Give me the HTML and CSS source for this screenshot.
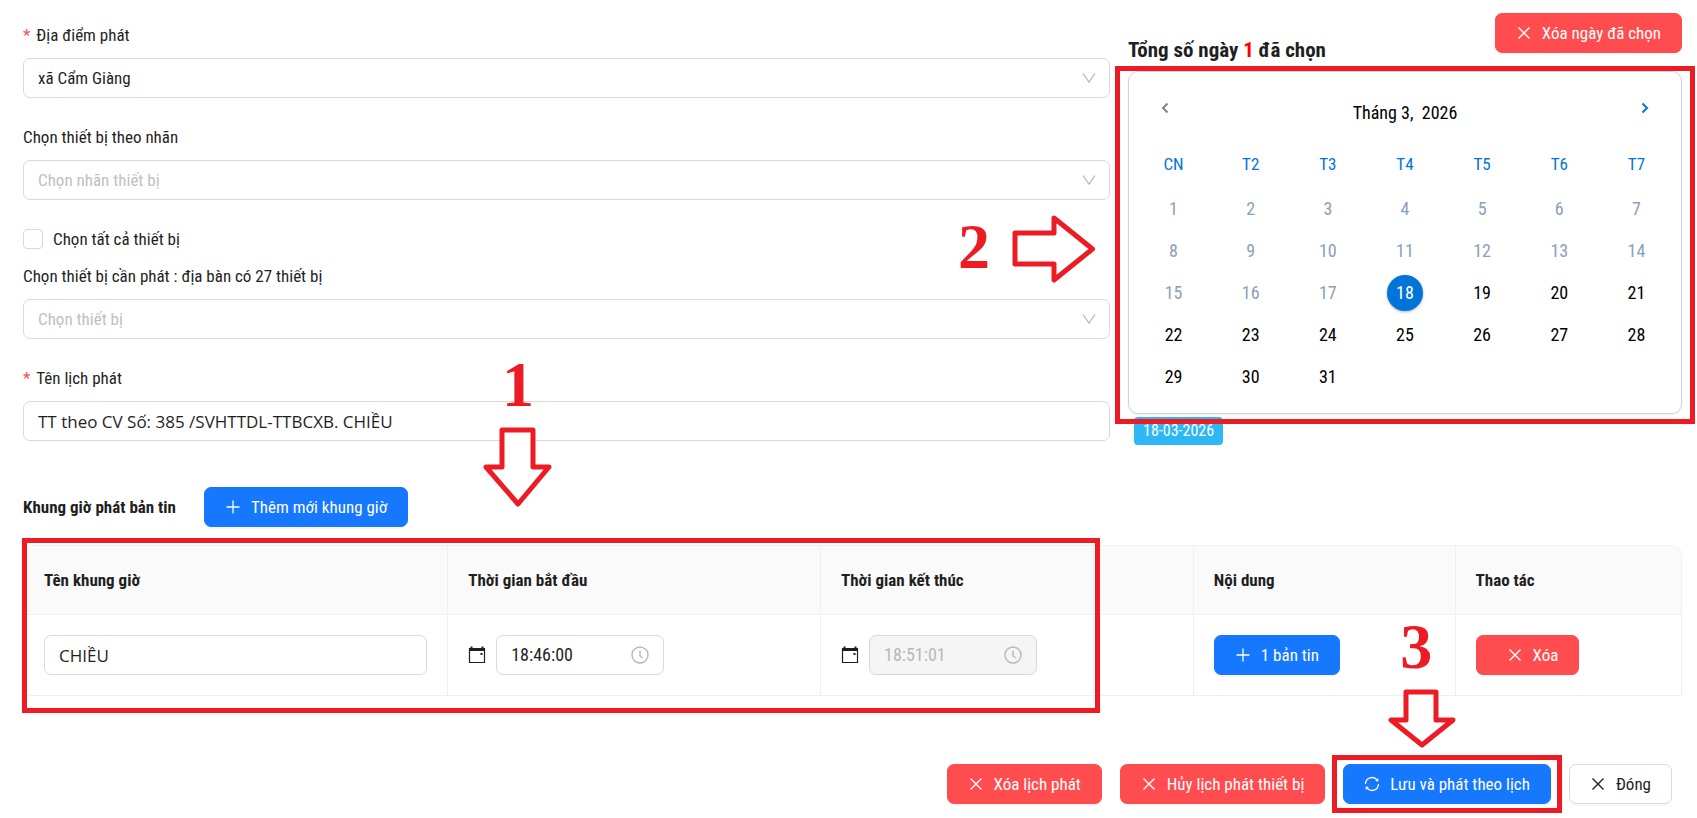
FILE: index.html
```html
<!DOCTYPE html>
<html lang="vi">
<head>
<meta charset="utf-8">
<title>Lịch phát</title>
<link rel="stylesheet" href="styles.css">
</head>
<body>
<svg class="sprite" aria-hidden="true">
  <symbol id="close" viewBox="0 0 16 16"><path d="M2.500 2.500l11 11M13.500 2.500l-11 11" fill="none" stroke="currentColor" stroke-width="1.400"/></symbol>
  <symbol id="plus" viewBox="0 0 16 16"><path d="M8 1.500v13M1.500 8h13" fill="none" stroke="currentColor" stroke-width="1.300"/></symbol>
  <symbol id="down" viewBox="0 0 16 16"><path d="M2 3.500l6 8.500 6-8.500" fill="none" stroke="currentColor" stroke-width="1.300"/></symbol>
  <symbol id="clock" viewBox="0 0 18 18"><circle cx="9" cy="9" r="8" fill="none" stroke="currentColor" stroke-width="1.400"/><path d="M9 4.500V10l3 2" fill="none" stroke="currentColor" stroke-width="1.400"/></symbol>
  <symbol id="date" viewBox="0 0 18 18"><path d="M1.500 2.500h15v14h-15z" fill="none" stroke="currentColor" stroke-width="1.200"/><path d="M1 2h16v3H1zM2.500.5h2V2h-2zM13.500.5h2V2h-2zM12.500 7h2v2h-2z" fill="currentColor"/></symbol>
  <symbol id="sync" viewBox="0 0 16 16"><path d="M1.500 8A6.500 6.500 0 0 1 13.200 4.200M14.500 8A6.500 6.500 0 0 1 2.800 11.800" fill="none" stroke="currentColor" stroke-width="1.300"/><path d="M14.300 2.200v3.300l-3.200-.4zM1.700 13.800v-3.300l3.200.4z" fill="currentColor"/></symbol>
</svg>
<main class="page">
  <div class="top">
    <form class="form">
      <div class="field">
        <label class="label required" for="place">Địa điểm phát</label>
        <div class="select">
          <select id="place"><option>xã Cẩm Giàng</option></select>
          <svg class="icon"><use href="#down"/></svg>
        </div>
      </div>
      <div class="field">
        <label class="label" for="tag">Chọn thiết bị theo nhãn</label>
        <div class="select">
          <select id="tag" class="empty"><option>Chọn nhãn thiết bị</option></select>
          <svg class="icon"><use href="#down"/></svg>
        </div>
      </div>
      <div class="field">
        <label class="check"><input type="checkbox">Chọn tất cả thiết bị</label>
        <label class="label" for="device">Chọn thiết bị cần phát : địa bàn có 27 thiết bị</label>
        <div class="select">
          <select id="device" class="empty"><option>Chọn thiết bị</option></select>
          <svg class="icon"><use href="#down"/></svg>
        </div>
      </div>
      <div class="field">
        <label class="label required" for="name">Tên lịch phát</label>
        <input class="input" id="name" type="text" value="TT theo CV Số: 385 /SVHTTDL-TTBCXB. CHIỀU">
      </div>
    </form>
    <section class="dates">
      <div class="dates-head">
        <h2>Tổng số ngày <span class="count">1</span> đã chọn</h2>
        <button class="btn danger"><svg class="icon"><use href="#close"/></svg>Xóa ngày đã chọn</button>
      </div>
      <div class="calendar">
        <div class="month">
          <button class="nav prev" aria-label="Tháng trước"><svg viewBox="0 0 8 12"><path d="M6.500 1.500L2 6l4.500 4.500" fill="none" stroke="currentColor" stroke-width="2"/></svg></button>
          <span class="month-name">Tháng 3, &nbsp;2026</span>
          <button class="nav next" aria-label="Tháng sau"><svg viewBox="0 0 8 12"><path d="M1.500 1.500L6 6l-4.500 4.500" fill="none" stroke="currentColor" stroke-width="2"/></svg></button>
        </div>
        <div class="week names"><span>CN</span><span>T2</span><span>T3</span><span>T4</span><span>T5</span><span>T6</span><span>T7</span></div>
        <div class="week">
          <button disabled>1</button><button disabled>2</button><button disabled>3</button><button disabled>4</button><button disabled>5</button><button disabled>6</button><button disabled>7</button>
          <button disabled>8</button><button disabled>9</button><button disabled>10</button><button disabled>11</button><button disabled>12</button><button disabled>13</button><button disabled>14</button>
          <button disabled>15</button><button disabled>16</button><button disabled>17</button><button class="picked">18</button><button>19</button><button>20</button><button>21</button>
          <button>22</button><button>23</button><button>24</button><button>25</button><button>26</button><button>27</button><button>28</button>
          <button>29</button><button>30</button><button>31</button>
        </div>
        <div class="frame frame-dates"></div>
        <div class="mark mark-2"><span>2</span><svg width="84" height="68" viewBox="0 0 84 68"><path d="M3 18h39V3l38.500 31L42 65V49H3z"/></svg></div>
      </div>
      <span class="chip">18-03-2026</span>
    </section>
  </div>

  <section class="slots">
    <div class="slots-head">
      <h3>Khung giờ phát bản tin</h3>
      <button class="btn primary"><svg class="icon"><use href="#plus"/></svg>Thêm mới khung giờ</button>
    </div>
    <table class="table">
      <colgroup><col class="c-name"><col class="c-time"><col class="c-time"><col class="c-content"><col class="c-action"></colgroup>
      <thead><tr><th>Tên khung giờ</th><th>Thời gian bắt đầu</th><th>Thời gian kết thúc</th><th>Nội dung</th><th>Thao tác</th></tr></thead>
      <tbody><tr>
        <td><input class="input" type="text" aria-label="Tên khung giờ" value="CHIỀU"></td>
        <td><div class="time"><svg class="date"><use href="#date"/></svg><div class="time-box"><input type="text" aria-label="Thời gian bắt đầu" value="18:46:00"><svg class="clock"><use href="#clock"/></svg></div></div></td>
        <td><div class="time"><svg class="date"><use href="#date"/></svg><div class="time-box off"><input type="text" aria-label="Thời gian kết thúc" value="18:51:01" disabled><svg class="clock"><use href="#clock"/></svg></div></div></td>
        <td><button class="btn primary"><svg class="icon"><use href="#plus"/></svg>1 bản tin</button></td>
        <td><button class="btn danger wide"><svg class="icon"><use href="#close"/></svg>Xóa</button></td>
      </tr></tbody>
    </table>
    <div class="frame frame-slots"></div>
    <div class="mark mark-1"><span>1</span><svg width="70" height="80" viewBox="0 0 70 80"><path d="M19 3h31v37h16L35 77 3 40h16z"/></svg></div>
  </section>

  <footer class="actions">
    <button class="btn danger"><svg class="icon"><use href="#close"/></svg>Xóa lịch phát</button>
    <button class="btn danger"><svg class="icon"><use href="#close"/></svg>Hủy lịch phát thiết bị</button>
    <div class="save">
      <button class="btn primary"><svg class="icon"><use href="#sync"/></svg>Lưu và phát theo lịch</button>
      <div class="frame frame-save"></div>
      <div class="mark mark-3"><span>3</span><svg width="68" height="60" viewBox="0 0 68 60"><path d="M18 3h30v28h17L34 56 3 31h15z"/></svg></div>
    </div>
    <button class="btn"><svg class="icon"><use href="#close"/></svg>Đóng</button>
  </footer>
</main>
</body>
</html>
```
FILE: styles.css
```css
* { box-sizing: border-box; }
body {
  margin: 0;
  background: #fff;
  color: #1f1f1f;
  font: 17px/24px "Liberation Sans Narrow", "Roboto Condensed", "Arial Narrow", "Liberation Sans", sans-serif;
}
button, input, select { font: inherit; color: inherit; margin: 0; }
button { cursor: pointer; }
h2, h3 { margin: 0; }
.sprite { display: none; }
.page { padding: 13px 15px 13px 23px; }

.top { display: grid; grid-template-columns: minmax(0, 1087fr) minmax(0, 554fr); gap: 18px; }
.form { display: flex; flex-direction: column; gap: 27px; padding-top: 10px; }
.field { display: flex; flex-direction: column; }
.label { margin-bottom: 11px; }
.required::before { content: "*"; color: #ff4d4f; margin-right: 6px; }
.select { position: relative; }
.select select, .input {
  display: block;
  width: 100%;
  height: 40px;
  padding: 0 14px;
  border: 1px solid #d9d9d9;
  border-radius: 7px;
  background: #fff;
  appearance: none;
}
.select .icon { position: absolute; right: 13px; top: 12px; width: 16px; height: 16px; color: #b8b8b8; }
select.empty { color: #bfbfbf; }
.input { font: 17px/24px "Open Sans", "Noto Sans", sans-serif; }
.check { display: flex; align-items: center; gap: 10px; margin-bottom: 13px; }
.check input {
  appearance: none;
  width: 20px;
  height: 20px;
  border: 1px solid #d9d9d9;
  border-radius: 4px;
}

.btn {
  display: inline-flex;
  align-items: center;
  justify-content: center;
  gap: 10px;
  height: 40px;
  padding: 0 20px;
  border: 1px solid #d9d9d9;
  border-radius: 7px;
  background: #fff;
  box-shadow: 0 2px 1px rgba(0, 0, 0, 0.03);
  white-space: nowrap;
}
.btn .icon { width: 16px; height: 16px; }
.primary { background: #1677ff; border-color: #1677ff; color: #fff; }
.danger { background: #ff4d4f; border-color: #ff4d4f; color: #fff; }
.wide { padding-left: 30px; }

.dates-head { display: flex; justify-content: space-between; height: 58px; }
.dates-head h2 { align-self: flex-end; font-size: 21px; line-height: 42px; }
.count { color: #f00; }
.calendar {
  position: relative;
  padding: 16px 6px 18px;
  border: 1px solid #cbd5e1;
  border-radius: 10px;
  box-shadow: 0 1px 2px rgba(0, 0, 0, 0.08);
  font-size: 18px;
}
.month { display: flex; justify-content: space-between; height: 54px; padding: 0 22px; color: #000; }
.month-name { line-height: 50px; }
.nav { width: 16px; height: 40px; padding: 4px; border: 0; background: none; color: #808080; }
.nav svg { display: block; width: 8px; height: 12px; }
.next { color: #0074d9; }
.week { display: grid; grid-template-columns: repeat(7, 1fr); justify-items: center; row-gap: 6px; }
.names { padding: 10px 0 15px; color: #0074d9; font-size: 17px; }
.week button { width: 36px; height: 36px; padding: 0; border: 0; border-radius: 50%; background: none; color: #000; }
.week button:disabled { color: #8ba0b8; }
.week .picked { background: #0074d9; color: #fff; box-shadow: 0 1px 3px rgba(0, 0, 0, 0.3); }
.chip {
  display: block;
  width: fit-content;
  margin: 3px 0 0 6px;
  padding: 2px 9px;
  border-radius: 4px;
  background: #2db7f5;
  color: #fff;
  font-size: 16px;
}

.slots { position: relative; margin-top: 42px; }
.slots-head { display: flex; align-items: center; gap: 28px; margin-bottom: 18px; }
.slots-head h3, .table th { font-size: 17px; font-weight: 700; }
.table {
  width: 100%;
  table-layout: fixed;
  border: 1px solid #f0f0f0;
  border-radius: 10px 10px 0 0;
  border-collapse: separate;
  border-spacing: 0;
}
.table th, .table td { padding: 20px; text-align: left; border-right: 1px solid #f0f0f0; }
.table th:last-child, .table td:last-child { border-right: 0; }
.table th { height: 69px; background: #fafafa; border-bottom: 1px solid #f0f0f0; }
.table th:last-child { border-top-right-radius: 9px; }
.table td { height: 81px; border-bottom: 1px solid #f0f0f0; }
.c-name { width: 25.600%; }
.c-time { width: 22.500%; }
.c-content { width: 15.800%; }
.time { display: flex; align-items: center; gap: 10px; font-size: 18px; }
.date { width: 18px; height: 18px; flex: none; }
.time-box {
  display: flex;
  align-items: center;
  width: 168px;
  height: 40px;
  padding: 0 14px;
  border: 1px solid #d9d9d9;
  border-radius: 7px;
}
.time-box input { flex: 1; min-width: 0; padding: 0; border: 0; background: none; }
.off { background: #f5f5f5; color: #b8b8b8; }
.clock { width: 18px; height: 18px; color: #b8b8b8; }
.table { border-bottom: 0; }

.actions { display: flex; justify-content: flex-end; gap: 18px; padding: 68px 10px 0 0; }
.save { position: relative; }

.frame { position: absolute; border: 5px solid #ed1c24; pointer-events: none; }
.frame-dates { inset: -6px -14px -11px -14px; }
.frame-slots { left: -1px; top: 51px; width: 65%; bottom: -17px; }
.frame-save { inset: -9px -11px; }
.mark { position: absolute; display: flex; align-items: center; color: #ed1c24; font: 700 64px/60px "Liberation Serif", serif; pointer-events: none; }
.mark span { padding-bottom: 4px; }
.mark path { fill: #fff; stroke: currentColor; stroke-width: 5; stroke-linejoin: round; }
.mark-1 { left: 460px; top: -132px; flex-direction: column; gap: 8px; }
.mark-2 { right: 585px; top: 143px; gap: 22px; }
.mark-3 { left: 45px; top: -147px; flex-direction: column; gap: 8px; }
.mark-3 span { padding-right: 12px; }
```
